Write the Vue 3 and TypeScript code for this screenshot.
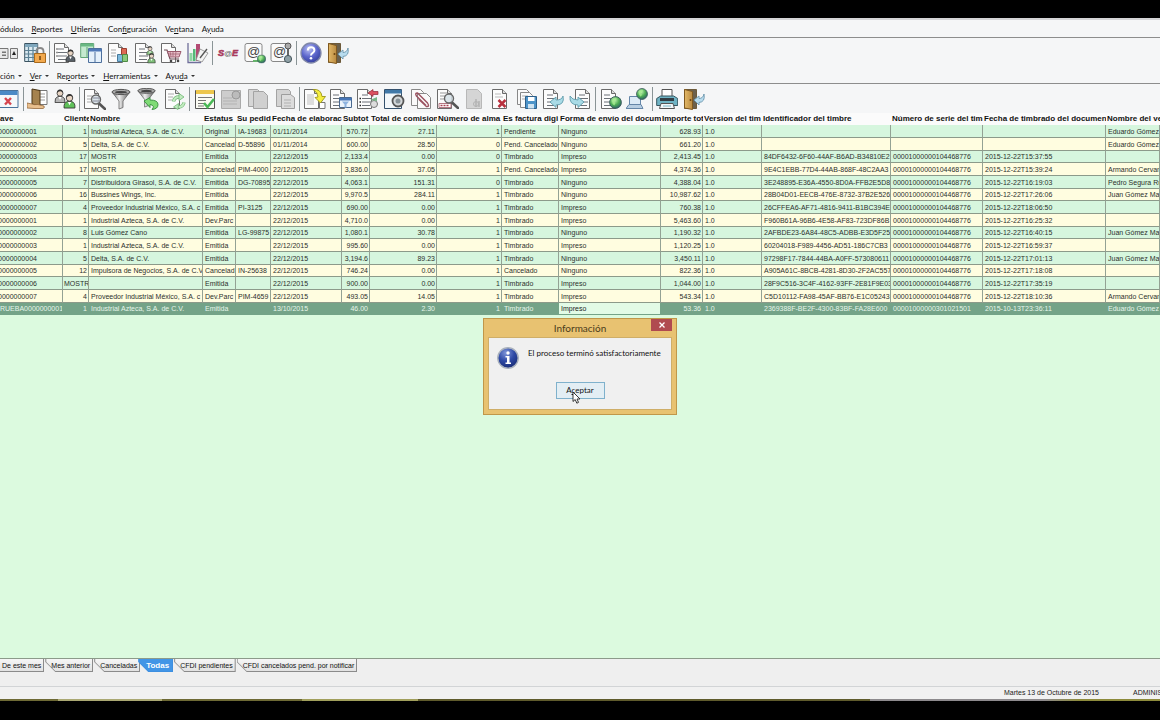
<script setup lang="ts">
import { ref } from 'vue'

interface MenuEntry {
  pre: string
  key: string
  post: string
}

interface Column {
  id: string
  label: string
  numeric?: boolean
}

interface Tool {
  icon: string
  label: string
  disabled?: boolean
}

const mainMenu: MenuEntry[] = [
  { pre: 'ódulos', key: '', post: '' },
  { pre: '', key: 'R', post: 'eportes' },
  { pre: '', key: 'U', post: 'tilerías' },
  { pre: 'Con', key: 'f', post: 'iguración' },
  { pre: 'Ve', key: 'n', post: 'tana' },
  { pre: 'A', key: 'y', post: 'uda' },
]

const moduleMenu: MenuEntry[] = [
  { pre: 'ción', key: '', post: '' },
  { pre: '', key: 'V', post: 'er' },
  { pre: 'Re', key: 'p', post: 'ortes' },
  { pre: '', key: 'H', post: 'erramientas' },
  { pre: 'Ayu', key: 'd', post: 'a' },
]

const mainTools: (Tool | null)[] = [
  { icon: 'keypad', label: 'Teclado' },
  { icon: 'calendar-lock', label: 'Periodo' },
  null,
  { icon: 'page-person', label: 'Clientes' },
  { icon: 'windows', label: 'Ventanas' },
  { icon: 'page-blocks', label: 'Inventarios' },
  { icon: 'page-people', label: 'Vendedores' },
  { icon: 'page-cart', label: 'Compras' },
  { icon: 'chart', label: 'Estadísticas' },
  null,
  { icon: 'sae', label: 'Portal' },
  { icon: 'at-globe', label: 'Internet' },
  { icon: 'at-tool', label: 'Servicios' },
  null,
  { icon: 'help', label: 'Ayuda' },
  { icon: 'door', label: 'Salir' },
]

const moduleTools: (Tool | null)[] = [
  { icon: 'window-x', label: 'Cerrar' },
  null,
  { icon: 'ledger', label: 'Agregar' },
  { icon: 'people', label: 'Clientes' },
  null,
  { icon: 'page-search', label: 'Buscar' },
  { icon: 'funnel', label: 'Filtrar' },
  { icon: 'funnel-undo', label: 'Quitar filtro' },
  { icon: 'page-refresh', label: 'Actualizar' },
  null,
  { icon: 'note-check', label: 'Detalle' },
  { icon: 'gray-card', label: 'Modificar', disabled: true },
  { icon: 'gray-copy', label: 'Copiar', disabled: true },
  { icon: 'gray-paste', label: 'Pegar', disabled: true },
  null,
  { icon: 'page-yellow', label: 'Enlazar' },
  { icon: 'page-filter', label: 'Parámetros' },
  { icon: 'page-red', label: 'Devolución' },
  { icon: 'window-lens', label: 'Consultar' },
  { icon: 'page-clip', label: 'Adjuntar' },
  { icon: 'page-cfdi', label: 'Ver comprobante' },
  { icon: 'gray-page', label: 'Timbrar', disabled: true },
  { icon: 'page-x', label: 'Cancelar' },
  { icon: 'page-save', label: 'Guardar' },
  { icon: 'page-in', label: 'Importar' },
  { icon: 'page-out', label: 'Exportar' },
  null,
  { icon: 'page-globe', label: 'Publicar' },
  { icon: 'laptop-globe', label: 'Enviar' },
  null,
  { icon: 'printer', label: 'Imprimir' },
  { icon: 'door', label: 'Cerrar módulo' },
]

const columns: Column[] = [
  { id: 'clave', label: 'ave' },
  { id: 'cliente', label: 'Cliente', numeric: true },
  { id: 'nombre', label: 'Nombre' },
  { id: 'estatus', label: 'Estatus' },
  { id: 'pedido', label: 'Su pedid' },
  { id: 'elaboracion', label: 'Fecha de elaborac' },
  { id: 'subtotal', label: 'Subtot', numeric: true },
  { id: 'comision', label: 'Total de comision', numeric: true },
  { id: 'almacen', label: 'Número de alma', numeric: true },
  { id: 'digital', label: 'Es factura digi' },
  { id: 'envio', label: 'Forma de envío del docum' },
  { id: 'importe', label: 'Importe tot', numeric: true },
  { id: 'version', label: 'Version del tim' },
  { id: 'timbre', label: 'Identificador del timbre' },
  { id: 'serie', label: 'Número de serie del tim' },
  { id: 'timbrado', label: 'Fecha de timbrado del documen' },
  { id: 'vendedor', label: 'Nombre del ve' },
]

const cert = '00001000000104468776'

const rows: string[][] = [
  ['0000000001', '1', 'Industrial Azteca, S.A. de C.V.', 'Original', 'IA-19683', '01/11/2014', '570.72', '27.11', '1', 'Pendiente', 'Ninguno', '628.93', '1.0', '', '', '', 'Eduardo Gómez'],
  ['0000000002', '5', 'Delta, S.A. de C.V.', 'Cancelad', 'D-55896', '01/11/2014', '600.00', '28.50', '0', 'Pend. Cancelado', 'Ninguno', '661.20', '1.0', '', '', '', 'Eduardo Gómez'],
  ['0000000003', '17', 'MOSTR', 'Emitida', '', '22/12/2015', '2,133.4', '0.00', '0', 'Timbrado', 'Impreso', '2,413.45', '1.0', '84DF6432-6F60-44AF-B6AD-B34810E2', cert, '2015-12-22T15:37:55', ''],
  ['0000000004', '17', 'MOSTR', 'Cancelad', 'PIM-4000', '22/12/2015', '3,836.0', '37.05', '1', 'Pend. Cancelado', 'Impreso', '4,374.36', '1.0', '9E4C1EBB-77D4-44AB-868F-48C2AA3', cert, '2015-12-22T15:39:24', 'Armando Cervan'],
  ['0000000005', '7', 'Distribuidora Girasol, S.A. de C.V.', 'Emitida', 'DG-70895', '22/12/2015', '4,063.1', '151.31', '0', 'Timbrado', 'Ninguno', '4,388.04', '1.0', '3E248895-E36A-4550-8D0A-FFB2E5D8', cert, '2015-12-22T16:19:03', 'Pedro Segura Ru'],
  ['0000000006', '16', 'Bussines Wings, Inc.', 'Emitida', '', '22/12/2015', '9,970.5', '284.11', '1', 'Timbrado', 'Ninguno', '10,987.62', '1.0', '28B04D01-EECB-476E-8732-37B2E526', cert, '2015-12-22T17:26:06', 'Juan Gómez Mar'],
  ['0000000007', '4', 'Proveedor Industrial México, S.A. c', 'Emitida', 'PI-3125', '22/12/2015', '690.00', '0.00', '1', 'Timbrado', 'Impreso', '760.38', '1.0', '26CFFEA6-AF71-4816-9411-B1BC394E', cert, '2015-12-22T18:06:50', ''],
  ['0000000001', '1', 'Industrial Azteca, S.A. de C.V.', 'Dev.Parc', '', '22/12/2015', '4,710.0', '0.00', '1', 'Timbrado', 'Impreso', '5,463.60', '1.0', 'F960B61A-96B6-4E58-AF83-723DF86B', cert, '2015-12-22T16:25:32', ''],
  ['0000000002', '8', 'Luis Gómez Cano', 'Emitida', 'LG-99875', '22/12/2015', '1,080.1', '30.78', '1', 'Timbrado', 'Ninguno', '1,190.32', '1.0', '2AFBDE23-6A84-48C5-ADBB-E3D5F25', cert, '2015-12-22T16:40:15', 'Juan Gómez Mar'],
  ['0000000003', '1', 'Industrial Azteca, S.A. de C.V.', 'Emitida', '', '22/12/2015', '995.60', '0.00', '1', 'Timbrado', 'Impreso', '1,120.25', '1.0', '60204018-F989-4456-AD51-186C7CB3', cert, '2015-12-22T16:59:37', ''],
  ['0000000004', '5', 'Delta, S.A. de C.V.', 'Emitida', '', '22/12/2015', '3,194.6', '89.23', '1', 'Timbrado', 'Ninguno', '3,450.11', '1.0', '97298F17-7844-44BA-A0FF-573080611', cert, '2015-12-22T17:01:13', 'Juan Gómez Mar'],
  ['0000000005', '12', 'Impulsora de Negocios, S.A. de C.V', 'Cancelad', 'IN-25638', '22/12/2015', '746.24', '0.00', '1', 'Cancelado', 'Ninguno', '822.36', '1.0', 'A905A61C-8BCB-4281-8D30-2F2AC557', cert, '2015-12-22T17:18:08', ''],
  ['0000000006', 'MOSTR', '', 'Emitida', '', '22/12/2015', '900.00', '0.00', '1', 'Timbrado', 'Impreso', '1,044.00', '1.0', '28F9C516-3C4F-4162-93FF-2E81F9E03', cert, '2015-12-22T17:35:19', ''],
  ['0000000007', '4', 'Proveedor Industrial México, S.A. c', 'Dev.Parc', 'PIM-4659', '22/12/2015', '493.05', '14.05', '1', 'Timbrado', 'Impreso', '543.34', '1.0', 'C5D10112-FA98-45AF-BB76-E1C05243', cert, '2015-12-22T18:10:36', 'Armando Cervan'],
  ['RUEBA0000000001', '1', 'Industrial Azteca, S.A. de C.V.', 'Emitida', '', '13/10/2015', '46.00', '2.30', '1', 'Timbrado', 'Impreso', '53.36', '1.0', '2369388F-BE2F-4300-83BF-FA28E600', '00001000000301021501', '2015-10-13T23:36:11', 'Eduardo Gómez'],
]

const selectedRow = ref(14)
const activeCell = ref('envio')

const tabs = ['De este mes', 'Mes anterior', 'Canceladas', 'Todas', 'CFDI pendientes', 'CFDI cancelados pend. por notificar']
const activeTab = ref('Todas')
const dialogOpen = ref(true)
</script>

<template>
  <div class="screen">
    <svg class="sprites" aria-hidden="true">
      <defs>
        <radialGradient id="g-blue" cx=".4" cy=".3" r=".8">
          <stop offset="0" stop-color="#b9c0f4" /><stop offset=".5" stop-color="#5c66cc" /><stop offset="1" stop-color="#2b3690" />
        </radialGradient>
        <radialGradient id="g-navy" cx=".4" cy=".25" r=".8">
          <stop offset="0" stop-color="#7f95d8" /><stop offset=".5" stop-color="#2f4aa6" /><stop offset="1" stop-color="#172a72" />
        </radialGradient>
        <radialGradient id="g-green" cx=".4" cy=".3" r=".8">
          <stop offset="0" stop-color="#c9f7b8" /><stop offset=".5" stop-color="#4fae55" /><stop offset="1" stop-color="#24506a" />
        </radialGradient>
        <linearGradient id="g-metal">
          <stop offset="0" stop-color="#666" /><stop offset=".4" stop-color="#eee" /><stop offset="1" stop-color="#555" />
        </linearGradient>
        <linearGradient id="g-wood">
          <stop offset="0" stop-color="#e3b968" /><stop offset="1" stop-color="#b98a40" />
        </linearGradient>

        <symbol id="sheet" viewBox="0 0 22 22">
          <path d="M2.500 1.500h10l4 4v15h-14z" fill="#fcfcfc" stroke="#6b6b6b" />
          <path d="M12.500 1.500v4h4" fill="#ddd" stroke="#6b6b6b" />
        </symbol>
        <symbol id="lines" viewBox="0 0 22 22">
          <path d="M5 7h6M5 10.500h9M5 14h9M5 17.500h8" stroke="#6c7178" stroke-width="1.200" />
        </symbol>
        <symbol id="globe" viewBox="0 0 22 22">
          <circle cx="11" cy="11" r="10" fill="url(#g-green)" stroke="#38565a" stroke-width="1.500" />
          <path d="M5 8q3-5 8-4l-2 4-3 1 3 3-2 4q-4-2-4-8z" fill="#a5ec90" opacity=".8" />
        </symbol>
        <symbol id="lens" viewBox="0 0 22 22">
          <path d="M13.500 15l6.500 6" stroke="#555" stroke-width="2.600" stroke-linecap="round" />
          <circle cx="11" cy="11.500" r="4.500" fill="#d5e0e6" fill-opacity=".85" stroke="#666" stroke-width="1.400" />
        </symbol>
        <symbol id="person" viewBox="0 0 12 14">
          <path d="M1 13.500q-.5-5 3-6h4q3.500 1 3 6z" fill="currentColor" stroke="#333" stroke-width=".8" />
          <circle cx="6" cy="4.200" r="3" fill="#e8d5c4" stroke="#333" stroke-width=".8" />
          <path d="M3 4q0-3.500 3-3.500t3 3.500q-1-2-3-1.700T3 4z" fill="#333" />
          <path d="M4.500 8l1.500 3 1.500-3z" fill="#fff" />
        </symbol>

        <symbol id="keypad" viewBox="0 0 22 22">
          <path d="M0 6.500h11v10H0zM13.500 6.500h7v10h-7z" fill="#e9e9e9" stroke="#777" />
          <path d="M5 9.500h4v1.500H5zM5 12.500h4V14H5z" fill="#777" /><path d="M15 13l2-4 2 4z" fill="#222" />
        </symbol>
        <symbol id="calendar-lock" viewBox="0 0 22 22">
          <path d="M.7 1.500h13v18H.7z" fill="#dcebf2" stroke="#3b5361" />
          <path d="M1 2h12.500v3H1z" fill="#7fa7bd" />
          <path d="M1 8.500h12M1 12h12M1 15.500h12M4.500 5v14M9 5v14" stroke="#5c8195" stroke-width="1.200" />
          <path d="M12.500 12V9.500q0-3.500 3.500-3.500t3.500 3.500V12" fill="none" stroke="#888" stroke-width="1.800" />
          <path d="M10.500 11.500h11v9h-11z" fill="#f2a94e" stroke="#a86a1d" /><path d="M15.300 14h1.400v4h-1.400z" fill="#6b3d09" />
        </symbol>
        <symbol id="page-person" viewBox="0 0 22 22">
          <use href="#sheet" x="-2" width="22" height="22" /><use href="#lines" x="-1" width="22" height="22" />
          <path d="M2.500 7h1M2.500 10.500h1M2.500 14h1" stroke="#222" stroke-width="1.500" />
          <use href="#person" x="11" y="6" width="11" height="15" color="#586068" />
        </symbol>
        <symbol id="windows" viewBox="0 0 22 22">
          <path d="M.7 1.500h13v14H.7z" fill="#c5ead0" stroke="#62a678" /><path d="M1 2h12.500v2.500H1z" fill="#69b883" /><path d="M7 5v10" stroke="#62a678" />
          <path d="M8.500 6.500h13v14h-13z" fill="#e4f0fb" stroke="#4d6f9c" /><path d="M9 7h12.500v2.500H9z" fill="#4f79b9" /><path d="M15 10v10" stroke="#4d6f9c" />
        </symbol>
        <symbol id="page-blocks" viewBox="0 0 22 22">
          <use href="#sheet" x="-1" width="22" height="22" />
          <path d="M4 8h5M4 11h5M4 14h5" stroke="#aaa" />
          <path d="M10.500 12.500h5v7h-5z" fill="#7db9dd" stroke="#47799a" /><path d="M14.500 6.500h5v6h-5z" fill="#dd6a55" stroke="#9a3f31" /><path d="M15.500 12.500h5v7h-5z" fill="#8acb7d" stroke="#4d8b45" />
        </symbol>
        <symbol id="page-people" viewBox="0 0 22 22">
          <use href="#sheet" x="-1" width="22" height="22" /><use href="#lines" width="22" height="22" />
          <use href="#person" x="12" y="3" width="8" height="11" color="#8cc487" /><use href="#person" x="13" y="10" width="9" height="12" color="#7fbf79" />
        </symbol>
        <symbol id="page-cart" viewBox="0 0 22 22">
          <use href="#sheet" x="-1" width="22" height="22" />
          <path d="M4 8h3l3 9h9" fill="none" stroke="#6c4a55" stroke-width="1.200" />
          <path d="M7.500 9.500H21l-2 5.500H9.500z" fill="#e9bfc9" stroke="#9c5a6c" /><path d="M10 9.500l1 5M13 9.500v5M16 9.500l-.5 5M8 12h12" stroke="#9c5a6c" stroke-width=".7" />
          <circle cx="11" cy="19" r="1.300" fill="#444" /><circle cx="18" cy="19" r="1.300" fill="#444" />
        </symbol>
        <symbol id="chart" viewBox="0 0 22 22">
          <path d="M1 1v19.500h13" fill="none" stroke="#6f6f9a" stroke-width="1.300" />
          <path d="M2.500 11h3v8h-3z" fill="#8fd5a4" /><path d="M6 7h2.500v12H6z" fill="#55b978" /><path d="M9 2h4v17H9z" fill="#b34b74" />
          <path d="M13 7l8 4-6 9-6-2z" fill="#f3f3f3" stroke="#888" stroke-width=".8" /><path d="M13 16l7-9" stroke="#555" stroke-width="1.300" />
        </symbol>
        <symbol id="sae" viewBox="0 0 22 22">
          <text x="11" y="14" text-anchor="middle" font-family="Liberation Sans, Arial, sans-serif" font-size="9" font-weight="700" font-style="italic" fill="#a93a5c" stroke="#a93a5c" stroke-width=".6">S<tspan fill="#666" stroke="none" font-size="8">@</tspan>E</text>
        </symbol>
        <symbol id="at-box" viewBox="0 0 22 22">
          <rect x="1" y="1.500" width="17" height="18" rx="2" fill="#fafafa" stroke="#888" />
          <text x="9.500" y="13.500" text-anchor="middle" font-family="Liberation Sans, Arial, sans-serif" font-size="13" fill="#444">@</text>
        </symbol>
        <symbol id="at-globe" viewBox="0 0 22 22">
          <use href="#at-box" width="22" height="22" /><path d="M9 19h5" stroke="#66b36c" stroke-width="2" /><use href="#globe" x="13" y="12.500" width="9" height="9" />
        </symbol>
        <symbol id="at-tool" viewBox="0 0 22 22">
          <use href="#at-box" width="22" height="22" /><path d="M18 6v9" stroke="#666" stroke-width="2" />
          <circle cx="18" cy="4" r="3" fill="#aaa" stroke="#555" /><circle cx="18" cy="17" r="3.600" fill="#8fa0a6" stroke="#45555b" />
        </symbol>
        <symbol id="help" viewBox="0 0 22 22">
          <circle cx="11" cy="11" r="10" fill="url(#g-blue)" stroke="#8088a8" stroke-width="1.300" />
          <path d="M7.800 8.500q0-3.300 3.300-3.300t3.300 3q0 1.800-1.700 2.700T11 13.500" fill="none" stroke="#fff" stroke-width="2" /><circle cx="11" cy="16.300" r="1.300" fill="#fff" />
        </symbol>
        <symbol id="door" viewBox="0 0 22 22">
          <path d="M1.500 1.500h12v19h-12z" fill="#6b604c" stroke="#6d5a3a" /><path d="M1.500 1.500l8 2v18l-8-1.500z" fill="url(#g-wood)" stroke="#80591f" /><circle cx="7.500" cy="12" r="1" fill="#6c4310" />
          <path d="M11 12l5-4v2.500q4 0 5-4.500 1.500 8-5 8.500V17z" fill="#b8dcee" stroke="#6b95ad" stroke-width=".9" />
        </symbol>

        <symbol id="window-x" viewBox="0 0 22 22">
          <path d="M0 2.500h21v17H0z" fill="#f5f8fb" stroke="#49729b" /><path d="M0 3h20.500v4H0z" fill="#4b8ac6" /><path d="M8 10l6 6.500M14 10l-6 6.500" stroke="#d6454f" stroke-width="2.400" />
        </symbol>
        <symbol id="ledger" viewBox="0 0 22 22">
          <path d="M11 2.500h9v14h-9z" fill="#fff" stroke="#777" /><path d="M12 6h6M12 9h6M12 12h6" stroke="#999" />
          <path d="M5 1l8 1.500V18l-8-2z" fill="#a5824e" stroke="#4a3515" />
          <path d="M0 15l5 1q2 1 6 .5l6 1.500q1 2-1 2.500H7L0 20z" fill="#e8bf8e" stroke="#95683b" stroke-width=".8" />
        </symbol>
        <symbol id="people" viewBox="0 0 22 22">
          <use href="#person" x="0" y="0" width="12" height="16" color="#b5b5b5" /><use href="#person" x="9" y="4" width="13" height="18" color="#5fc05a" />
        </symbol>
        <symbol id="page-search" viewBox="0 0 22 22">
          <use href="#sheet" x="-2" width="22" height="22" /><path d="M3 8h5M3 11h4M3 14h5" stroke="#aaa" /><use href="#lens" x="1" width="22" height="22" /><path d="M9 10h7M9 13h7" stroke="#889" />
        </symbol>
        <symbol id="funnel" viewBox="0 0 22 22">
          <path d="M2 4l7 9v8l4-1.500V13l7-9z" fill="url(#g-metal)" stroke="#666" stroke-width=".8" /><ellipse cx="11" cy="4" rx="9" ry="2.600" fill="#aaa" stroke="#555" /><ellipse cx="11" cy="4.200" rx="6" ry="1.300" fill="#444" />
        </symbol>
        <symbol id="funnel-undo" viewBox="0 0 22 22">
          <use href="#funnel" x="-1" y="-1" width="21" height="21" />
          <path d="M7 13l6-3.500v2.500q8 0 8 4.500 0 4.500-6 5 3.500-4-2-5v3z" fill="#7fdb76" stroke="#338a3b" stroke-width=".9" />
        </symbol>
        <symbol id="page-refresh" viewBox="0 0 22 22">
          <use href="#sheet" x="-1" width="22" height="22" /><path d="M4 6h6M4 9h5M4 12h4" stroke="#aaa" />
          <path d="M9.500 13.500q1-4.500 5.500-4.500M20 14.500q-1 4.500-5.500 4.500" fill="none" stroke="#6fb873" stroke-width="3.400" />
          <path d="M9.500 13.500q1-4.500 5.500-4.500M20 14.500q-1 4.500-5.500 4.500" fill="none" stroke="#c3ebc1" stroke-width="2" />
          <path d="M15 5.500l5 3.500-5 3.500zM14.500 15.500l-5 3.500 4.500 2.500z" fill="#c3ebc1" stroke="#6fb873" stroke-width=".8" />
        </symbol>
        <symbol id="note-check" viewBox="0 0 22 22">
          <path d="M1.500 2.500h19v18h-19z" fill="#fbfbf3" stroke="#555" /><path d="M2 2h18v4H2z" fill="#edc64b" /><path d="M4 9.500h14M4 12.500h8M4 15.500h7M4 18h6" stroke="#777" />
          <path d="M10 15l3.500 4L20 11" fill="none" stroke="#49b856" stroke-width="2.600" />
        </symbol>
        <symbol id="gray-card" viewBox="0 0 22 22">
          <path d="M1.500 2.500h19v18h-19z" fill="#cdcdcd" stroke="#aaa" /><path d="M3 10h9M3 13h14M3 16h14" stroke="#b3b3b3" /><circle cx="16" cy="7" r="4" fill="#bbb" stroke="#999" />
        </symbol>
        <symbol id="gray-copy" viewBox="0 0 22 22">
          <path d="M1.500 1.500h9l3 3v14h-12z" fill="#d6d6d6" stroke="#a3a3a3" /><path d="M6.500 3.500h10l4 4v13h-14z" fill="#d0d0d0" stroke="#a3a3a3" />
        </symbol>
        <symbol id="gray-paste" viewBox="0 0 22 22">
          <path d="M2.500 1.500h12l2 2v15h-14z" fill="#d3d3d3" stroke="#a3a3a3" /><path d="M7.500 6.500h9l4 3v11h-13z" fill="#dcdcdc" stroke="#9d9d9d" /><path d="M10 12h7M10 15h7M10 18h7" stroke="#b0b0b0" />
        </symbol>
        <symbol id="page-yellow" viewBox="0 0 22 22">
          <use href="#sheet" x="-2" width="22" height="22" /><path d="M3 6h7v11H3z" fill="#ddd" /><path d="M15.500 14.500h5.500v6h-5.500z" fill="#fff" stroke="#777" />
          <path d="M9 1.500q8-1 9 7h3.500L16.500 15 11 9.500l3-.5Q14 4.500 9 1.500z" fill="#f5ee3f" stroke="#9b9418" stroke-width=".9" />
        </symbol>
        <symbol id="page-filter" viewBox="0 0 22 22">
          <use href="#sheet" x="-2" width="22" height="22" /><use href="#lines" x="-2" width="22" height="22" />
          <path d="M9.500 9.500h12v10h-12z" fill="#edf4fb" stroke="#49688f" /><path d="M10 10h11.500v2.500H10z" fill="#4675b7" /><path d="M12 13.500h7l-2.500 3v3h-2v-3z" fill="#8fb3df" />
        </symbol>
        <symbol id="page-red" viewBox="0 0 22 22">
          <use href="#sheet" x="-2" width="22" height="22" /><use href="#lines" width="22" height="22" /><path d="M2.500 10.500h1.500M2.500 14h1.500M2.500 17.500h1.500" stroke="#222" stroke-width="1.500" />
          <path d="M11 5l5-3.500v2h5v3h-5v2z" fill="#dc5260" stroke="#902935" stroke-width=".7" /><circle cx="17" cy="16" r="3.500" fill="#ddd" stroke="#777" /><path d="M13 12l7-3v4" fill="#79b888" />
        </symbol>
        <symbol id="window-lens" viewBox="0 0 22 22">
          <path d="M1.500 1.500h17v19h-17z" fill="#f4f8fb" stroke="#34516d" /><path d="M2 2h16.500v3.500H2z" fill="#4179a8" />
          <circle cx="15" cy="13" r="5.500" fill="#d4d8da" stroke="#555" stroke-width="1.800" /><circle cx="15" cy="13" r="2.500" fill="#889298" />
        </symbol>
        <symbol id="page-clip" viewBox="0 0 22 22">
          <path d="M1.500 1.500h9l3 3v13h-12z" fill="#fafafa" stroke="#888" /><path d="M7.500 5.500h9l4 4v11h-13z" fill="#fafafa" stroke="#888" />
          <path d="M16 17.500L6.500 8q-2-3 1-3l10 10q2.500 4-1 3.500L8.500 11" fill="none" stroke="#9c5361" stroke-width="1.400" />
        </symbol>
        <symbol id="page-cfdi" viewBox="0 0 22 22">
          <use href="#sheet" x="-2" width="22" height="22" /><path d="M3 5h7M3 8h5M3 11h5" stroke="#999" /><path d="M2 15.500h12v4H2z" fill="#fff" stroke="#b67984" /><path d="M3.500 17.500h9" stroke="#a94150" stroke-width="1.600" stroke-dasharray="2 1" />
          <use href="#lens" x="1" y="-1" width="22" height="22" />
        </symbol>
        <symbol id="gray-page" viewBox="0 0 22 22">
          <path d="M3.500 1.500h11l4 4v15h-15z" fill="#d5d5d5" stroke="#b8b8b8" /><path d="M13 11v8M16 13v6" stroke="#b3b3b3" stroke-width="1.500" /><circle cx="13" cy="16" r="2.500" fill="none" stroke="#b3b3b3" />
        </symbol>
        <symbol id="page-x" viewBox="0 0 22 22">
          <use href="#sheet" width="22" height="22" /><path d="M5 6h6M5 9h8" stroke="#bbb" /><path d="M8.500 12l7 7M15.500 12l-7 7" stroke="#b8303d" stroke-width="2.500" />
        </symbol>
        <symbol id="page-save" viewBox="0 0 22 22">
          <path d="M1.500 1.500h9l3 3v12h-12z" fill="#fafafa" stroke="#888" /><path d="M4.500 4.500h9l3 3v12h-12z" fill="#fafafa" stroke="#888" /><path d="M6 8h6M6 11h3" stroke="#aaa" />
          <path d="M9.500 8.500h11v12h-11z" fill="#4d94c9" stroke="#2d5f8a" /><path d="M12 9h6.500v4H12z" fill="#fff" /><path d="M12 16h6v4.500h-6z" fill="#cfe3f1" />
        </symbol>
        <symbol id="page-in" viewBox="0 0 22 22">
          <use href="#sheet" x="-2" width="22" height="22" /><use href="#lines" x="-1" width="22" height="22" />
          <path d="M7 14l6-5v3q6 0 7-4 2 9-7 9v2.500z" fill="#a9dbe6" stroke="#5f9cab" stroke-width=".9" />
        </symbol>
        <symbol id="page-out" viewBox="0 0 22 22">
          <use href="#sheet" x="4" width="22" height="22" /><use href="#lines" x="5" width="22" height="22" />
          <path d="M15 14L9 9v3Q3 12 1 8q-1 9 8 9v2.500z" fill="#a9dbe6" stroke="#5f9cab" stroke-width=".9" />
        </symbol>
        <symbol id="page-globe" viewBox="0 0 22 22">
          <use href="#sheet" x="-1" width="22" height="22" /><use href="#lines" x="-1" width="22" height="22" /><use href="#globe" x="9" y="8" width="13" height="13" />
        </symbol>
        <symbol id="laptop-globe" viewBox="0 0 22 22">
          <path d="M3.500 8.500h11v8h-11z" fill="#dceaf6" stroke="#6586a8" /><path d="M0 20.500l3-4h12l2 4z" fill="#b8cee2" stroke="#6586a8" /><use href="#globe" x="10" y="0" width="12" height="12" />
        </symbol>
        <symbol id="printer" viewBox="0 0 22 22">
          <path d="M6 1.500h10v9H6z" fill="#fff" stroke="#555" /><path d="M.7 10.500l4-2.500h13l4 2.500v7H.7z" fill="#6fb3c4" stroke="#36555f" /><path d="M4 10h14v3H4z" fill="#333d44" /><path d="M5 15.500h12l1.500 5h-15z" fill="#f3f7f9" stroke="#555" /><path d="M7 18h8" stroke="#79b6c7" />
        </symbol>
        <symbol id="info" viewBox="0 0 22 22">
          <circle cx="11" cy="11" r="10.200" fill="url(#g-navy)" stroke="#a9b1bd" stroke-width="1.400" />
          <circle cx="11" cy="6" r="1.700" fill="#fff" /><path d="M8.500 9h4v6.500H14V17H8.500v-1.500H10v-5H8.500z" fill="#fff" />
        </symbol>
      </defs>
    </svg>

    <div class="letterbox top"></div>

    <div class="app">
      <nav class="menu main" aria-label="Menú principal">
        <button v-for="m in mainMenu" :key="m.pre + m.key + m.post" type="button">{{ m.pre }}<u>{{ m.key }}</u>{{ m.post }}</button>
      </nav>

      <div class="toolbar main-tools" role="toolbar" aria-label="Módulos">
        <template v-for="(t, i) in mainTools" :key="i">
          <button v-if="t" type="button" :aria-label="t.label"><svg><use :href="'#' + t.icon" /></svg></button>
          <i v-else class="sep"></i>
        </template>
      </div>

      <nav class="menu module" aria-label="Menú del módulo">
        <button v-for="m in moduleMenu" :key="m.pre + m.key + m.post" type="button" class="drop">{{ m.pre }}<u>{{ m.key }}</u>{{ m.post }}</button>
      </nav>

      <div class="toolbar module-tools" role="toolbar" aria-label="Facturas">
        <template v-for="(t, i) in moduleTools" :key="i">
          <button v-if="t" type="button" :aria-label="t.label" :disabled="t.disabled"><svg><use :href="'#' + t.icon" /></svg></button>
          <i v-else class="sep"></i>
        </template>
      </div>

      <main class="grid-area">
        <table>
          <colgroup>
            <col v-for="c in columns" :key="c.id" :class="'w-' + c.id" />
          </colgroup>
          <thead>
            <tr>
              <th v-for="c in columns" :key="c.id" scope="col">{{ c.label }}</th>
            </tr>
          </thead>
          <tbody>
            <tr v-for="(r, i) in rows" :key="i" :class="{ selected: i === selectedRow }" @click="selectedRow = i">
              <td
                v-for="(v, j) in r"
                :key="j"
                :class="{ num: columns[j].numeric && v !== 'MOSTR', clave: j === 0 && i !== 14, active: i === selectedRow && columns[j].id === activeCell }"
              >{{ v }}</td>
            </tr>
          </tbody>
        </table>
      </main>

      <div class="tabs" role="tablist">
        <button v-for="t in tabs" :key="t" type="button" role="tab" :aria-selected="t === activeTab" :class="{ on: t === activeTab }" @click="activeTab = t"><span>{{ t }}</span></button>
      </div>

      <footer class="status">
        <span class="date">Martes 13 de Octubre de 2015</span>
        <span class="user">ADMINIS</span>
      </footer>
      <div class="taskbar"></div>
    </div>

    <div class="letterbox bottom"></div>

    <section v-if="dialogOpen" class="dialog" role="dialog" aria-labelledby="dlg-title">
      <header>
        <h2 id="dlg-title">Información</h2>
        <button type="button" class="close" aria-label="Cerrar" @click="dialogOpen = false">
          <svg viewBox="0 0 6 6"><path d="M.5 .5l5 5M5.500 .5l-5 5" stroke="#fff" stroke-width="1.300" /></svg>
        </button>
      </header>
      <div class="body">
        <svg class="info"><use href="#info" /></svg>
        <p>El proceso terminó satisfactoriamente</p>
        <button type="button" class="ok" @click="dialogOpen = false">A<u>c</u>eptar</button>
      </div>
      <svg class="cursor" viewBox="0 0 9 13"><path d="M1 1v9.500l2.200-2 1.600 3.700 1.700-.8L5 8h3z" fill="#fff" stroke="#222" stroke-width=".9" /></svg>
    </section>
  </div>
</template>

<style>
body {
  margin: 0;
  background: #000;
}
</style>

<style scoped>
.screen {
  position: relative;
  display: flex;
  flex-direction: column;
  height: 100vh;
  overflow: hidden;
  background: #000;
  font-family: "Liberation Sans", Arial, sans-serif;
  font-size: 7px;
  color: #222;
}
.sprites {
  position: absolute;
  width: 0;
  height: 0;
}
button {
  margin: 0;
  padding: 0;
  border: 0;
  background: none;
  font: inherit;
  color: inherit;
}
.letterbox {
  flex: none;
  background: #000;
}
.letterbox.top {
  height: 18px;
}
.letterbox.bottom {
  height: 19px;
}
.app {
  flex: 1;
  min-height: 0;
  display: flex;
  flex-direction: column;
  background: #f5f6f7;
  border-top: 2px solid #d4d4d6;
}
.menu {
  flex: none;
  display: flex;
  align-items: center;
  gap: 8px;
  font-family: Lato, "Open Sans", sans-serif;
  font-size: 8px;
  line-height: 12px;
  color: #111;
  white-space: nowrap;
  border-bottom: 1px solid #8d8d8d;
}
.menu.main {
  height: 17px;
}
.menu.module {
  height: 15px;
}
.drop::after {
  content: "";
  display: inline-block;
  margin-left: 3px;
  vertical-align: 2px;
  border: 2px solid transparent;
  border-top-color: #333;
  border-bottom: 0;
}
.toolbar {
  flex: none;
  display: flex;
  align-items: center;
  justify-content: space-between;
  margin-left: -3px;
}
.main-tools {
  width: 352px;
  height: 30px;
}
.module-tools {
  width: 708px;
  height: 29px;
}
.toolbar button,
.toolbar svg {
  display: block;
  width: 22px;
  height: 22px;
}
.sep {
  width: 1px;
  height: 24px;
  margin: 0 -1px;
  background: #8a9496;
}
.grid-area {
  flex: 1;
  min-height: 0;
  overflow: hidden;
  background: #dcfadf;
}
table {
  width: 100%;
  table-layout: fixed;
  border-collapse: separate;
  border-spacing: 0;
}
.w-clave { width: 63px; }
.w-cliente { width: 26px; }
.w-nombre { width: 114px; }
.w-estatus { width: 33px; }
.w-pedido { width: 35px; }
.w-elaboracion { width: 71px; }
.w-subtotal { width: 28px; }
.w-comision { width: 67px; }
.w-almacen { width: 65px; }
.w-digital { width: 57px; }
.w-envio { width: 102px; }
.w-importe { width: 42px; }
.w-version { width: 59px; }
.w-timbre { width: 129px; }
.w-serie { width: 92px; }
.w-timbrado { width: 123px; }
th,
td {
  box-sizing: border-box;
  padding: 0 0 0 1px;
  overflow: hidden;
  white-space: nowrap;
  text-align: left;
}
th {
  height: 12px;
  line-height: 12px;
  background: #fbfbfb;
  font-size: 8px;
  font-weight: 700;
  color: #111;
}
td {
  height: 13px;
  padding: 0 1px 0 2px;
  line-height: 11px;
  color: #2c302c;
  border-right: 1px solid #93a294;
  border-bottom: 1px solid #8c9a8a;
}
th:first-child,
td:first-child {
  padding-left: 0;
}
td:nth-child(2) {
  padding-left: 1px;
}
tr:nth-child(3n) td {
  height: 12px;
}
tr:nth-child(odd) td {
  background: #d6f6de;
}
tr:nth-child(even) td {
  background: #fffde0;
}
.num {
  text-align: right;
}
.clave {
  text-indent: -2px;
}
tr.selected td {
  background: #74a388;
  border-color: #74a388;
  color: #e6f6ea;
}
tr.selected td.active {
  background: #e2fbe6;
  color: #222;
}
.tabs {
  flex: none;
  display: flex;
  height: 27px;
  align-items: flex-start;
  border-top: 1px solid #8c9a8a;
  background: #efefef;
  color: #111;
}
.tabs button {
  position: relative;
  height: 13px;
  line-height: 12px;
  padding: 0 3px 0 6px;
  margin-right: 1px;
  white-space: nowrap;
  background: #8b8b8b;
  clip-path: polygon(0 0, 100% 0, 100% 100%, 10px 100%, 0 3px);
}
.tabs button::before {
  content: "";
  position: absolute;
  inset: 0 1px 1px 0;
  background: linear-gradient(#f6f6f6, #e2e2e2);
  clip-path: polygon(1px 0, 100% 0, 100% 100%, 10px 100%, 1px 3px);
}
.tabs button:first-child {
  padding-left: 2px;
  clip-path: none;
}
.tabs button:first-child::before {
  clip-path: none;
}
.tabs span {
  position: relative;
}
.tabs .on {
  background: #3d8fe0;
  color: #fff;
  font-size: 8px;
  font-weight: 700;
  margin-left: -3px;
  padding: 0 4px 0 8px;
}
.tabs .on::before {
  background: #4295e6;
}
.status {
  flex: none;
  display: flex;
  justify-content: flex-end;
  height: 12px;
  line-height: 12px;
  border-top: 1px solid #d2d4d6;
  background: #f1f1f1;
  white-space: nowrap;
}
.date {
  width: 129px;
}
.user {
  width: 27px;
}
.taskbar {
  flex: none;
  height: 2px;
  background: linear-gradient(90deg, #6e6a35 0 5%, #aaa873 5% 14%, #6e6a35 14% 26%, #a19f5c 26% 36%, #5f5b2c 36% 75%, #8d8a8d 75% 90%, #8d8b3c 93%);
}
.dialog {
  position: absolute;
  left: 50%;
  top: 318px;
  box-sizing: border-box;
  width: 194px;
  margin-left: -97px;
  padding: 0 4px 4px;
  background: #e8c271;
  border: 1px solid #c0974a;
  font-family: Lato, "Open Sans", sans-serif;
  font-size: 8px;
  color: #111;
}
.dialog header {
  position: relative;
  height: 18px;
}
.dialog h2 {
  margin: 0;
  font-size: 10px;
  font-weight: 400;
  line-height: 18px;
  text-align: center;
  color: #4a3c1c;
}
.close {
  position: absolute;
  top: 0;
  right: 0;
  display: flex;
  align-items: center;
  justify-content: center;
  width: 21px;
  height: 12px;
  background: #b04a50;
}
.close svg {
  width: 6px;
  height: 6px;
}
.body {
  display: grid;
  grid-template-columns: 22px minmax(0, 1fr);
  column-gap: 9px;
  padding: 9px 8px 10px;
  background: #f0f0f0;
  border: 1px solid #cfae68;
}
.info {
  width: 22px;
  height: 22px;
}
.body p {
  margin: 0;
  line-height: 12px;
  white-space: nowrap;
}
.ok {
  grid-column: 1 / -1;
  justify-self: center;
  box-sizing: border-box;
  width: 49px;
  height: 17px;
  margin-top: 13px;
  line-height: 15px;
  background: #e3eef4;
  border: 1px solid #7fb1cc;
}
.cursor {
  position: absolute;
  left: 88px;
  top: 72px;
  width: 9px;
  height: 13px;
}
</style>
